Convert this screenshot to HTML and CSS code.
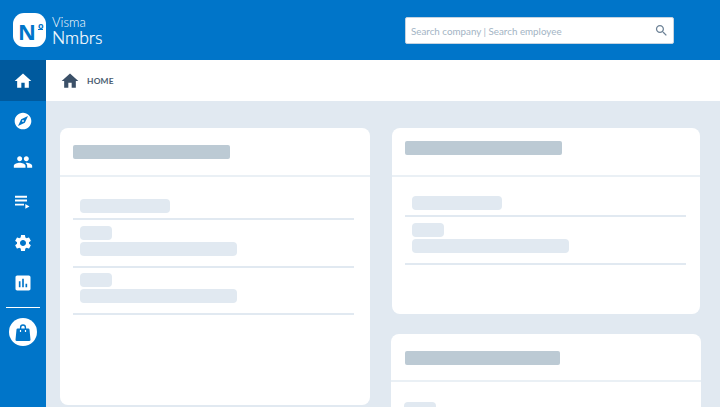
FILE: index.html
```html
<!DOCTYPE html>
<html>
<head>
	<title>Visma Nmbrs</title>
	<meta charset="utf-8">
	<link rel="stylesheet" href="styles.css">
</head>
<body>
	<header class="topbar">
		<div class="brand">
			<div class="logo"><span class="logo-n">N</span><span class="logo-o">o</span></div>
			<div class="brand-text">
				<div class="brand-small">Visma</div>
				<div class="brand-big">Nmbrs</div>
			</div>
		</div>
		<div class="search">
			<span class="search-text">Search company | Search employee</span>
			<svg class="search-icon" viewBox="0 0 24 24"><path d="M15.5 14h-.79l-.28-.27C15.41 12.59 16 11.11 16 9.5 16 5.91 13.09 3 9.5 3S3 5.91 3 9.5 5.91 16 9.5 16c1.61 0 3.09-.59 4.23-1.57l.27.28v.79l5 4.99L20.49 19l-4.99-5zm-6 0C7.01 14 5 11.99 5 9.5S7.01 5 9.5 5 14 7.01 14 9.5 11.99 14 9.5 14z"/></svg>
		</div>
	</header>

	<div class="main">
		<nav class="sidebar">
			<div class="nav-item active"><svg viewBox="0 0 24 24"><path d="M10 20v-6h4v6h5v-8h3L12 3 2 12h3v8z"/></svg></div>
			<div class="nav-item"><svg viewBox="0 0 24 24"><path d="M12 10.9c-.61 0-1.1.49-1.1 1.1s.49 1.1 1.1 1.1c.61 0 1.1-.49 1.1-1.1s-.49-1.1-1.1-1.1zM12 2C6.48 2 2 6.48 2 12s4.48 10 10 10 10-4.48 10-10S17.52 2 12 2zm2.19 12.19L6 18l3.81-8.19L18 6l-3.81 8.19z"/></svg></div>
			<div class="nav-item"><svg viewBox="0 0 24 24"><path d="M16 11c1.66 0 2.99-1.34 2.99-3S17.66 5 16 5c-1.66 0-3 1.34-3 3s1.34 3 3 3zm-8 0c1.66 0 2.99-1.34 2.99-3S9.66 5 8 5C6.34 5 5 6.34 5 8s1.34 3 3 3zm0 2c-2.33 0-7 1.17-7 3.5V19h14v-2.5c0-2.33-4.67-3.5-7-3.5zm8 0c-.29 0-.62.02-.97.05 1.16.84 1.97 1.97 1.97 3.45V19h6v-2.5c0-2.33-4.67-3.5-7-3.5z"/></svg></div>
			<div class="nav-item"><svg viewBox="0 0 24 24"><path d="M2.400 4.500h14.400v2.300H2.400zm0 4.600h14.400v2.300H2.400zm0 4.900h10.800v2.300H2.400zM14.800 14.500V20l5-2.750z"/></svg></div>
			<div class="nav-item"><svg viewBox="0 0 24 24"><path d="M19.14 12.94c.04-.3.06-.61.06-.94 0-.32-.02-.64-.07-.94l2.03-1.58c.18-.14.23-.41.12-.61l-1.92-3.32c-.12-.22-.37-.29-.59-.22l-2.39.96c-.5-.38-1.03-.7-1.62-.94l-.36-2.54c-.04-.24-.24-.41-.48-.41h-3.84c-.24 0-.43.17-.47.41l-.36 2.54c-.59.24-1.13.57-1.62.94l-2.39-.96c-.22-.08-.47 0-.59.22L2.74 8.87c-.12.21-.08.47.12.61l2.03 1.58c-.05.3-.09.63-.09.94s.02.64.07.94l-2.03 1.58c-.18.14-.23.41-.12.61l1.92 3.32c.12.22.37.29.59.22l2.39-.96c.5.38 1.03.7 1.62.94l.36 2.54c.05.24.24.41.48.41h3.84c.24 0 .44-.17.47-.41l.36-2.54c.59-.24 1.13-.56 1.62-.94l2.39.96c.22.08.47 0 .59-.22l1.92-3.32c.12-.22.07-.47-.12-.61l-2.01-1.58zM12 15.6c-1.98 0-3.6-1.62-3.6-3.6s1.62-3.6 3.6-3.6 3.6 1.62 3.6 3.6-1.62 3.6-3.6 3.6z"/></svg></div>
			<div class="nav-item"><svg viewBox="0 0 24 24"><path d="M19 3H5c-1.1 0-2 .9-2 2v14c0 1.1.9 2 2 2h14c1.1 0 2-.9 2-2V5c0-1.1-.9-2-2-2zM9 17H7v-7h2v7zm4 0h-2V7h2v10zm4 0h-2v-4h2v4z"/></svg></div>
			<div class="nav-rule"></div>
			<div class="bag">
				<svg viewBox="0 0 28 28"><path fill-rule="evenodd" d="M8.600 10.500h2.300V9.400a3.100 3.100 0 0 1 6.200 0v1.100h2.300c.6 0 1 .4 1.100 1l1 10.300c.1.7-.4 1.200-1.100 1.200H7.600c-.7 0-1.200-.5-1.100-1.200l1-10.300c.1-.6.5-1 1.100-1zm3.700 0h3.400V9.400a1.700 1.700 0 0 0-3.400 0zm-1.400 1.600v2h1.200v-2zm5 0v2h1.200v-2z"/></svg>
			</div>
		</nav>

		<div class="page">
			<div class="crumb">
				<svg class="crumb-icon" viewBox="0 0 24 24"><path d="M10 20v-6h4v6h5v-8h3L12 3 2 12h3v8z"/></svg>
				<span class="crumb-text">HOME</span>
			</div>
			<div class="content">
				<div class="col col-left">
					<div class="card card-tall">
						<div class="card-head"><div class="ph ph-title"></div></div>
						<div class="card-body">
							<div class="row row-one"><div class="ph ph-mid"></div></div>
							<div class="row"><div class="ph ph-small"></div><div class="ph ph-wide"></div></div>
							<div class="row"><div class="ph ph-small"></div><div class="ph ph-wide"></div></div>
						</div>
					</div>
				</div>
				<div class="col col-right">
					<div class="card card-short">
						<div class="card-head head-up"><div class="ph ph-title"></div></div>
						<div class="card-body body-up">
							<div class="row row-one"><div class="ph ph-mid"></div></div>
							<div class="row"><div class="ph ph-small"></div><div class="ph ph-wide"></div></div>
						</div>
					</div>
					<div class="card card-last">
						<div class="card-head head-last"><div class="ph ph-title"></div></div>
						<div class="card-body body-last">
							<div class="ph ph-small"></div>
						</div>
					</div>
				</div>
			</div>
		</div>
	</div>
</body>
</html>
```

FILE: styles.css
```css
*,*::after,*::before{
	box-sizing: border-box;
	margin: 0;
	padding: 0;
}

body{
	width: 720px;
	height: 407px;
	overflow: hidden;
	font-family: 'Lato', sans-serif;
	background-color: #e1e9f1;
}

.topbar{
	height: 60px;
	background-color: #0075c9;
	display: flex;
	align-items: center;
	justify-content: space-between;
	padding: 0 46px 0 13px;
}

.brand{
	display: flex;
	align-items: center;
	gap: 6px;
}

.logo{
	width: 33px;
	height: 34px;
	border-radius: 11px;
	background-color: white;
	color: #0075c9;
	display: flex;
	align-items: flex-start;
	padding: 7px 0 0 5px;
	font-family: 'Open Sans', sans-serif;
	font-weight: 700;
}

.logo-n{
	font-size: 22px;
	line-height: 22px;
}

.logo-o{
	margin: 3px 0 0 2px;
	font-size: 9px;
	line-height: 6px;
	height: 7px;
	border-bottom: 1px solid #0075c9;
}

.brand-text{
	color: white;
	margin-top: 1px;
}

.brand-small{
	font-size: 13px;
	line-height: 14px;
	font-weight: 300;
}

.brand-big{
	font-size: 17.5px;
	line-height: 18px;
	font-weight: 300;
	-webkit-text-stroke: 0.2px white;
}

.search{
	width: 269px;
	height: 27px;
	margin-top: 1px;
	background-color: white;
	border-radius: 2px;
	border: 1px solid #c5d3e0;
	display: flex;
	align-items: center;
	justify-content: space-between;
	padding: 0 4px 0 5px;
}

.search-text{
	font-size: 9.8px;
	color: #a3b4c4;
}

.search-icon{
	width: 15px;
	height: 15px;
	fill: #6d8296;
}

.main{
	display: flex;
	height: 347px;
}

.sidebar{
	width: 46px;
	flex-shrink: 0;
	background-color: #0075c9;
}

.nav-item{
	height: 40.5px;
	padding-top: 1px;
	display: flex;
	align-items: center;
	justify-content: center;
}

.nav-item svg{
	width: 20px;
	height: 20px;
	fill: white;
}

.active{
	background-color: #005a9e;
}

.nav-rule{
	height: 1px;
	margin: 4px 6px 10px;
	background-color: white;
}

.bag{
	width: 28px;
	height: 28px;
	margin: 0 auto;
	border-radius: 50%;
	background-color: white;
}

.bag svg{
	display: block;
	width: 28px;
	height: 28px;
	fill: #0075c9;
}

.page{
	flex: 1;
	min-width: 0;
}

.crumb{
	height: 41px;
	background-color: white;
	display: flex;
	align-items: center;
	padding-left: 14px;
}

.crumb-icon{
	width: 20px;
	height: 20px;
	fill: #3b5068;
}

.crumb-text{
	margin-left: 7px;
	font-size: 8.4px;
	font-weight: 700;
	letter-spacing: 0.2px;
	color: #4a5d70;
}

.content{
	display: flex;
	gap: 22px;
	padding: 27px 20px 0 14px;
}

.col{
	display: flex;
	flex-direction: column;
}

.col-left{
	width: 310px;
}

.col-right{
	width: 308px;
}

.card{
	background-color: white;
	border-radius: 8px;
}

.card-tall{
	height: 277px;
}

.card-short{
	height: 186px;
	margin-bottom: 20px;
}

.card-last{
	width: 310px;
	margin-left: -1px;
	height: 120px;
}

.card-head{
	height: 49px;
	padding: 17px 0 0 13px;
	border-bottom: 2px solid #eaf0f5;
}

.head-up{
	padding-top: 13px;
}

.head-last{
	height: 48px;
	padding: 17px 0 0 14px;
}

.card-body{
	padding: 22px 16px 0 13px;
}

.body-up{
	padding: 19px 14px 0 13px;
}

.body-last{
	padding: 20px 0 0 13px;
}

.ph{
	border-radius: 4px;
	background-color: #e1e9f1;
	height: 14px;
}

.ph-title{
	width: 157px;
	border-radius: 2px;
	background-color: #bccad4;
}

.head-last .ph-title{
	width: 155px;
}

.ph-mid{
	width: 90px;
	margin-left: 7px;
}

.ph-small{
	width: 32px;
	margin-left: 7px;
	margin-bottom: 2px;
}

.ph-wide{
	width: 157px;
	margin-left: 7px;
}

.body-last .ph-small{
	margin-left: 0;
}

.row{
	padding: 5px 0 10px;
	border-bottom: 2px solid #e1e9f1;
}

.row-one{
	padding: 0 0 5px;
	margin-bottom: 1px;
}
```
